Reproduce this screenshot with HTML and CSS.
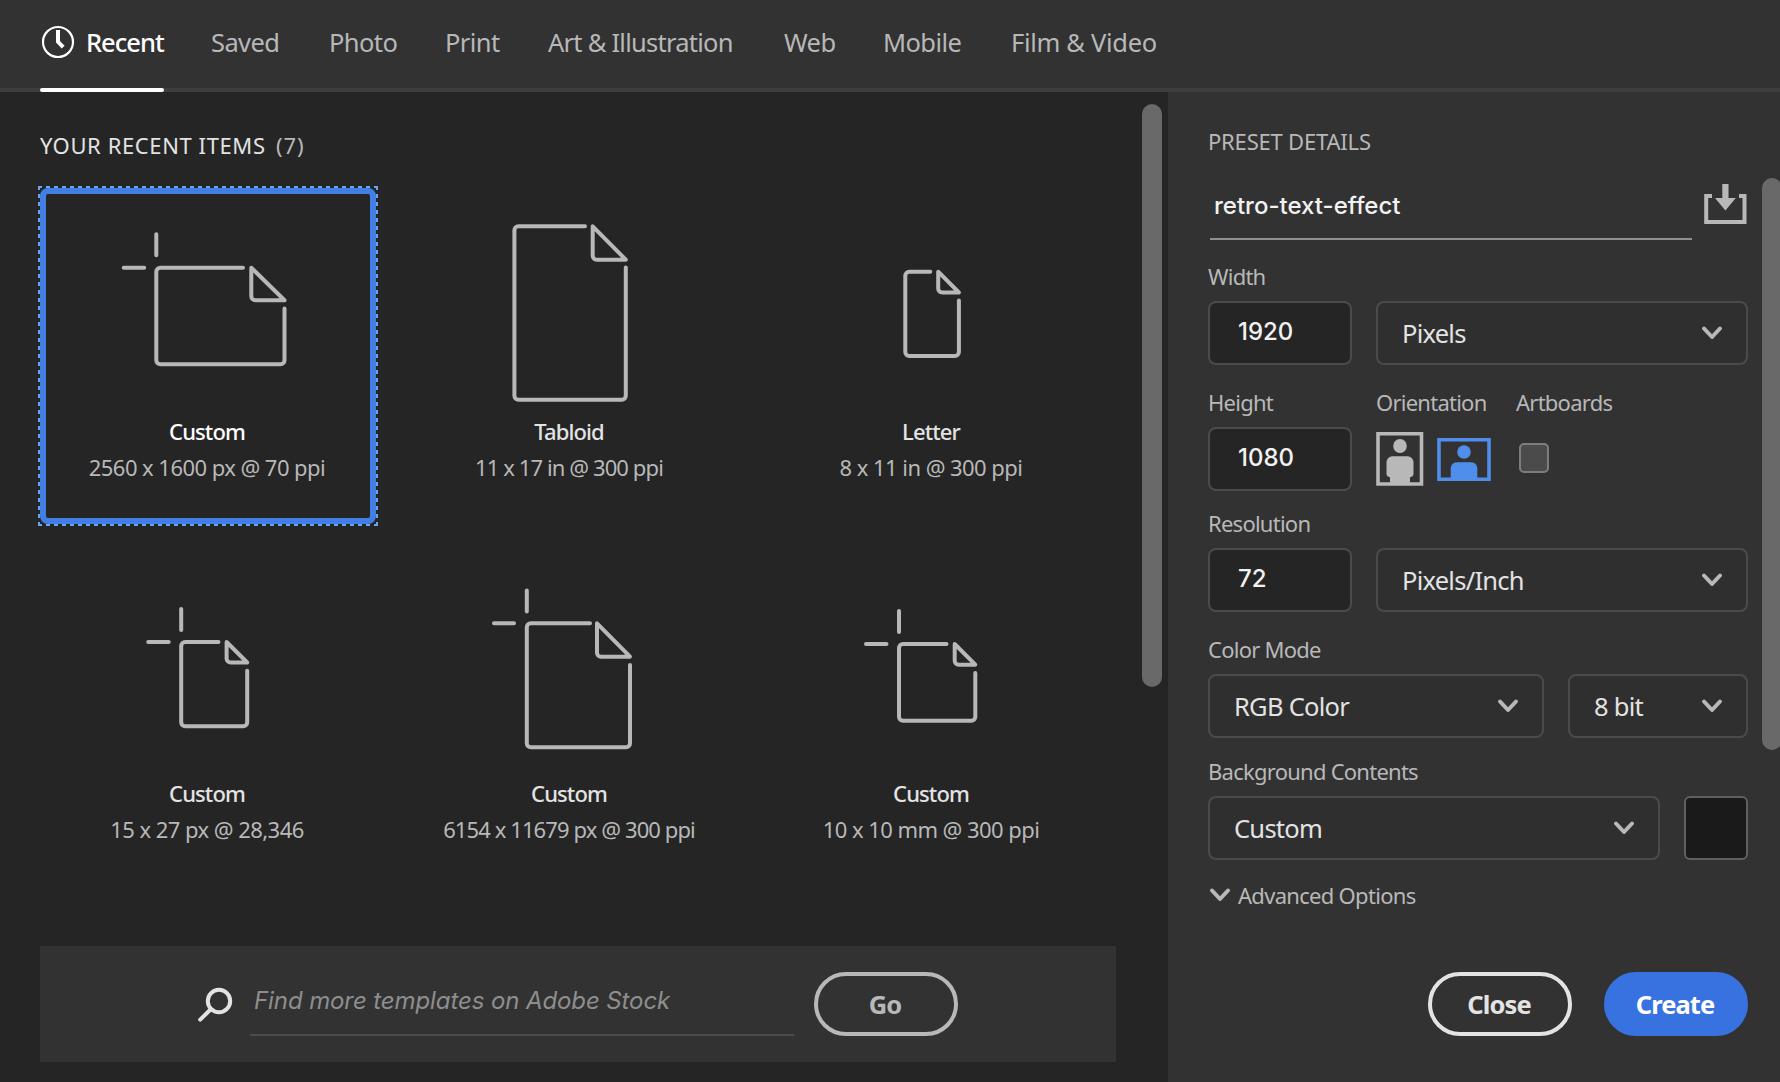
FILE: index.html
```html
<!DOCTYPE html>
<html lang="en">
<head>
<meta charset="utf-8">
<title>New Document</title>
<link rel="stylesheet" href="styles.css">
</head>
<body>
<div class="dialog">
  <nav class="tabs">
    <a class="tab active">
      <svg class="clock" width="34" height="34" viewBox="0 0 34 34"><circle cx="17" cy="17" r="15" fill="none" stroke="currentColor" stroke-width="2.2"/><path d="M17 5v11.800l5.200 5.400" fill="none" stroke="currentColor" stroke-width="4"/></svg>
      <span>Recent</span>
    </a>
    <a class="tab">Saved</a>
    <a class="tab">Photo</a>
    <a class="tab">Print</a>
    <a class="tab tight">Art &amp; Illustration</a>
    <a class="tab">Web</a>
    <a class="tab">Mobile</a>
    <a class="tab loose">Film &amp; Video</a>
  </nav>
  <div class="main">
    <section class="recent">
      <h2 class="heading">YOUR RECENT ITEMS <span class="count">(7)</span></h2>
      <div class="cards">
        <div class="card selected">
          <svg class="doc" viewBox="6 6 324 219"><path d="M116.300 46.300v21M83.700 79.700h20.500M203 79.700H120.300a4 4 0 0 0-4 4V172.300a4 4 0 0 0 4 4H240.500a4 4 0 0 0 4-4V120.500"/><path d="M211.300 79.700L244.500 112.300H215.300a4 4 0 0 1-4-4z"/></svg>
          <div class="name">Custom</div>
          <div class="size">2560 x 1600 px @ 70 ppi</div>
        </div>
        <div class="card">
          <svg class="doc" viewBox="6 6 324 219"><path d="M183 38.300H116.400a4 4 0 0 0-4 4V207.700a4 4 0 0 0 4 4H219.800a4 4 0 0 0 4-4V79.500"/><path d="M190.700 38.300L223.800 71.700H194.700a4 4 0 0 1-4-4z"/></svg>
          <div class="name">Tabloid</div>
          <div class="size narrow">11 x 17 in @ 300 ppi</div>
        </div>
        <div class="card">
          <svg class="doc" viewBox="6 6 324 219"><path d="M166.300 83.700H145.300a4 4 0 0 0-4 4V164a4 4 0 0 0 4 4H190.900a4 4 0 0 0 4-4V112.500"/><path d="M174.200 83.700L194.900 104.500H178.200a4 4 0 0 1-4-4z"/></svg>
          <div class="name">Letter</div>
          <div class="size">8 x 11 in @ 300 ppi</div>
        </div>
        <div class="card">
          <svg class="doc" viewBox="6 6 324 219"><path d="M141.200 59v21M108.200 92h20.500M178.500 92H145.200a4 4 0 0 0-4 4V172.300a4 4 0 0 0 4 4H203.200a4 4 0 0 0 4-4V120.700"/><path d="M186.600 92L207.200 112.500H190.600a4 4 0 0 1-4-4z"/></svg>
          <div class="name">Custom</div>
          <div class="size">15 x 27 px @ 28,346</div>
        </div>
        <div class="card">
          <svg class="doc" viewBox="6 6 324 219"><path d="M124.800 40.500v21M92 73.300h20M188 73.300H128.800a4 4 0 0 0-4 4V193.300a4 4 0 0 0 4 4H224a4 4 0 0 0 4-4V115"/><path d="M195 73.300L228 106.700H199a4 4 0 0 1-4-4z"/></svg>
          <div class="name">Custom</div>
          <div class="size narrow">6154 x 11679 px @ 300 ppi</div>
        </div>
        <div class="card">
          <svg class="doc" viewBox="6 6 324 219"><path d="M135 61v21M102 94h20.500M182.500 94H139a4 4 0 0 0-4 4V166.700a4 4 0 0 0 4 4H207.300a4 4 0 0 0 4-4V123"/><path d="M190.700 94L211.300 114.700H194.700a4 4 0 0 1-4-4z"/></svg>
          <div class="name">Custom</div>
          <div class="size">10 x 10 mm @ 300 ppi</div>
        </div>
      </div>
      <div class="search">
        <svg class="lens" width="36" height="36" viewBox="0 0 36 36"><circle cx="22" cy="14" r="11.200"/><path d="M13.500 22.500L3.200 32.700"/></svg>
        <div class="query">Find more templates on Adobe Stock</div>
        <div class="button go">Go</div>
      </div>
      <div class="scroll scroll-left"></div>
    </section>
    <aside class="details">
      <h2 class="panel-title">PRESET DETAILS</h2>
      <div class="name-row">
        <div class="doc-name">retro-text-effect</div>
        <svg class="save" width="44" height="42" viewBox="0 0 44 42"><path d="M9 13H3.200V39H41.500V13H36" fill="none" stroke="currentColor" stroke-width="4"/><path d="M19.300 1h6.200v14h7.300L22.400 27.500 12 15h7.300z" fill="currentColor"/></svg>
      </div>
      <div class="row row-width">
        <div class="field"><div class="label">Width</div><div class="input">1920</div></div>
        <div class="field grow"><div class="label"></div><div class="select">Pixels<svg class="chevron" width="22" height="16" viewBox="0 0 22 16"><path d="M3 3.500l8 8.500 8-8.500"/></svg></div></div>
      </div>
      <div class="row row-height">
        <div class="field"><div class="label">Height</div><div class="input">1080</div></div>
        <div class="field orient">
          <div class="label">Orientation</div>
          <div class="icons">
            <svg width="48" height="56" viewBox="0 0 48 56" fill="#b8b8b8"><path d="M2 2.800H45.500V53H2z" fill="none" stroke="#b8b8b8" stroke-width="3.600"/><ellipse cx="24" cy="15" rx="6.800" ry="6.900"/><path d="M16.500 25.300h15a6 6 0 0 1 6 6V43q0 2.500-3.500 3.200V54H14V46.200q-3.500-.7-3.500-3.200V31.300a6 6 0 0 1 6-6z"/></svg>
            <svg width="54" height="45" viewBox="0 0 54 45" fill="#4f8eea"><path d="M2 2.800H52V42.300H2z" fill="none" stroke="#4f8eea" stroke-width="3.600"/><circle cx="27" cy="15" r="6.800"/><path d="M19.700 25.300h14.600a6 6 0 0 1 6 6V42H13.700V31.300a6 6 0 0 1 6-6z"/></svg>
          </div>
        </div>
        <div class="field"><div class="label">Artboards</div><div class="checkbox"></div></div>
      </div>
      <div class="row row-resolution">
        <div class="field"><div class="label">Resolution</div><div class="input">72</div></div>
        <div class="field grow"><div class="label"></div><div class="select">Pixels/Inch<svg class="chevron" width="22" height="16" viewBox="0 0 22 16"><path d="M3 3.500l8 8.500 8-8.500"/></svg></div></div>
      </div>
      <div class="row row-mode">
        <div class="field grow"><div class="label">Color Mode</div><div class="select">RGB Color<svg class="chevron" width="22" height="16" viewBox="0 0 22 16"><path d="M3 3.500l8 8.500 8-8.500"/></svg></div></div>
        <div class="field depth"><div class="label"></div><div class="select">8 bit<svg class="chevron" width="22" height="16" viewBox="0 0 22 16"><path d="M3 3.500l8 8.500 8-8.500"/></svg></div></div>
      </div>
      <div class="row row-background">
        <div class="field grow"><div class="label">Background Contents</div><div class="select">Custom<svg class="chevron" width="22" height="16" viewBox="0 0 22 16"><path d="M3 3.500l8 8.500 8-8.500"/></svg></div></div>
        <div class="field"><div class="label"></div><div class="swatch"></div></div>
      </div>
      <div class="advanced"><svg class="chevron" width="22" height="16" viewBox="0 0 22 16"><path d="M3 3.500l8 8.500 8-8.500"/></svg>Advanced Options</div>
      <div class="actions">
        <div class="button close">Close</div>
        <div class="button create">Create</div>
      </div>
      <div class="scroll scroll-right"></div>
    </aside>
  </div>
</div>
</body>
</html>
```
FILE: styles.css
```css
* { box-sizing: border-box; }
body { margin: 0; background: #323232; color: #b8b8b8; font-family: "Noto Sans", sans-serif; font-weight: 450; }
svg { display: block; flex: none; }
h2 { margin: 0; font-weight: 450; font-size: 22px; line-height: 32px; }

.dialog { width: 1780px; height: 1082px; overflow: hidden; display: flex; flex-direction: column; }

.tabs {
  height: 92px; flex: none; padding-left: 40px; border-bottom: 4px solid #3e3e3e;
  display: grid; grid-template-columns: 171px 118px 116px 103px 236px 99px 128px 160px;
  font-size: 25.5px; line-height: 84px; letter-spacing: -0.6px; white-space: nowrap;
}
.tab.tight { letter-spacing: -0.75px; }
.tab.loose { letter-spacing: -0.3px; }
.tab.active {
  width: 124px; height: 92px; display: flex; gap: 11px; color: #fff; font-weight: 500;
  letter-spacing: -1px; position: relative;
}
.tab.active::after { content: ""; position: absolute; left: 0; right: 0; bottom: 0; height: 4px; border-radius: 2px; background: #fff; }
.clock { margin: 25px 0 0 1px; }

.main { flex: 1; display: flex; min-height: 0; }
.recent { width: 1168px; padding: 0 52px 20px 40px; background: #252525; display: flex; flex-direction: column; position: relative; }
.heading { height: 96px; padding-top: 37px; color: #e3e3e3; letter-spacing: 0.6px; }
.count { color: #b8b8b8; margin-left: 4px; letter-spacing: 1px; }

.cards { display: grid; grid-template-columns: repeat(3, 336px); grid-auto-rows: 336px; gap: 26px; }
.card { border: 6px solid transparent; border-radius: 8px; text-align: center; line-height: 36px; white-space: nowrap; font-size: 22px; }
.card.selected { border-color: #427fe4; position: relative; }
.card.selected::before {
  content: ""; position: absolute; inset: -8px;
  background:
    repeating-linear-gradient(90deg, #6aa4f6 0 4px, transparent 4px 8px) 0 0 / 100% 2px no-repeat,
    repeating-linear-gradient(90deg, #6aa4f6 0 4px, transparent 4px 8px) 0 100% / 100% 2px no-repeat,
    repeating-linear-gradient(#6aa4f6 0 4px, transparent 4px 8px) 0 0 / 2px 100% no-repeat,
    repeating-linear-gradient(#6aa4f6 0 4px, transparent 4px 8px) 100% 0 / 2px 100% no-repeat;
}
.doc { width: 324px; height: 219px; fill: none; stroke: #b8b8b8; stroke-width: 4; stroke-linecap: round; stroke-linejoin: round; }
.name, .size { padding-right: 2px; }
.name { color: #e3e3e3; font-weight: 500; letter-spacing: -0.9px; }
.selected .name { color: #fff; }
.size { letter-spacing: -0.55px; }
.size.narrow { letter-spacing: -0.9px; }

.search { width: 1076px; height: 116px; margin-top: auto; background: #323232; display: flex; padding: 26px 158px 0 157px; }
.lens { margin-top: 15px; fill: none; stroke: #e3e3e3; stroke-width: 4; stroke-linecap: round; }
.query {
  width: 544px; height: 64px; margin: 0 20px 0 17px; padding-left: 4px; border-bottom: 2px solid #4b4b4b;
  font: italic 450 24px/58px Inter, sans-serif; letter-spacing: -0.1px; color: #8e8e8e;
}
.button {
  width: 144px; height: 64px; flex: none; border: 4px solid #b8b8b8; border-radius: 32px; padding-right: 2px;
  font-weight: 700; font-size: 25.5px; line-height: 56px; letter-spacing: -0.9px; text-align: center;
}
.close { border-color: #e3e3e3; color: #e3e3e3; }
.create { border-color: #3871e0; background: #3871e0; color: #fff; }

.scroll { position: absolute; width: 20px; border-radius: 10px; background: #696969; }
.scroll-left { left: 1142px; top: 12px; height: 583px; }
.scroll-right { left: 594px; top: 86px; height: 572px; }

.details { width: 612px; padding: 33px 32px 46px 40px; display: flex; flex-direction: column; position: relative; overflow: hidden; white-space: nowrap; }
.panel-title { letter-spacing: -0.2px; }
.name-row { display: flex; margin-top: 13px; height: 70px; padding-left: 2px; }
.doc-name { width: 482px; padding-left: 4px; border-bottom: 2px solid #8f8f8f; font: 450 24px/71px Inter, sans-serif; color: #f2f2f2; }
.save { margin: 13px 0 0 11px; }
.row { display: flex; gap: 24px; }
.row-width { margin-top: 21px; }
.row-height { margin-top: 22px; }
.row-resolution { margin-top: 17px; }
.row-mode { margin-top: 22px; }
.row-background { margin-top: 18px; }
.label { height: 32px; margin-bottom: 8px; font-size: 22px; line-height: 31px; letter-spacing: -0.75px; }
.grow { flex: 1; }
.depth { width: 180px; }
.orient { width: 116px; }
.input, .select { height: 64px; border: 2px solid #4b4b4b; border-radius: 8px; }
.input { width: 144px; padding-left: 28px; background: #252525; font: 450 24px/57px Inter, sans-serif; color: #f2f2f2; }
.select { padding: 0 23px 0 24px; background: #2f2f2f; color: #e3e3e3; font-size: 25.5px; line-height: 60px; letter-spacing: -0.75px; display: flex; align-items: center; justify-content: space-between; }
.chevron { fill: none; stroke: #b8b8b8; stroke-width: 4; stroke-linecap: round; stroke-linejoin: round; }
.icons { display: flex; align-items: center; gap: 13px; padding-top: 4px; }
.checkbox { width: 30px; height: 30px; margin: 24px 0 0 3px; border: 2px solid #7d7d7d; border-radius: 5px; background: #4b4b4b; }
.label + .checkbox { margin-top: 16px; position: static; transform: translateY(8px); }
.swatch { width: 64px; height: 64px; border: 2px solid #5f5f5f; border-radius: 6px; background: #1a1a1a; }
.advanced { margin-top: 19px; padding-left: 1px; display: flex; align-items: center; gap: 7px; font-size: 22px; line-height: 32px; letter-spacing: -0.7px; }
.actions { margin-top: auto; display: flex; justify-content: flex-end; gap: 32px; }
```
